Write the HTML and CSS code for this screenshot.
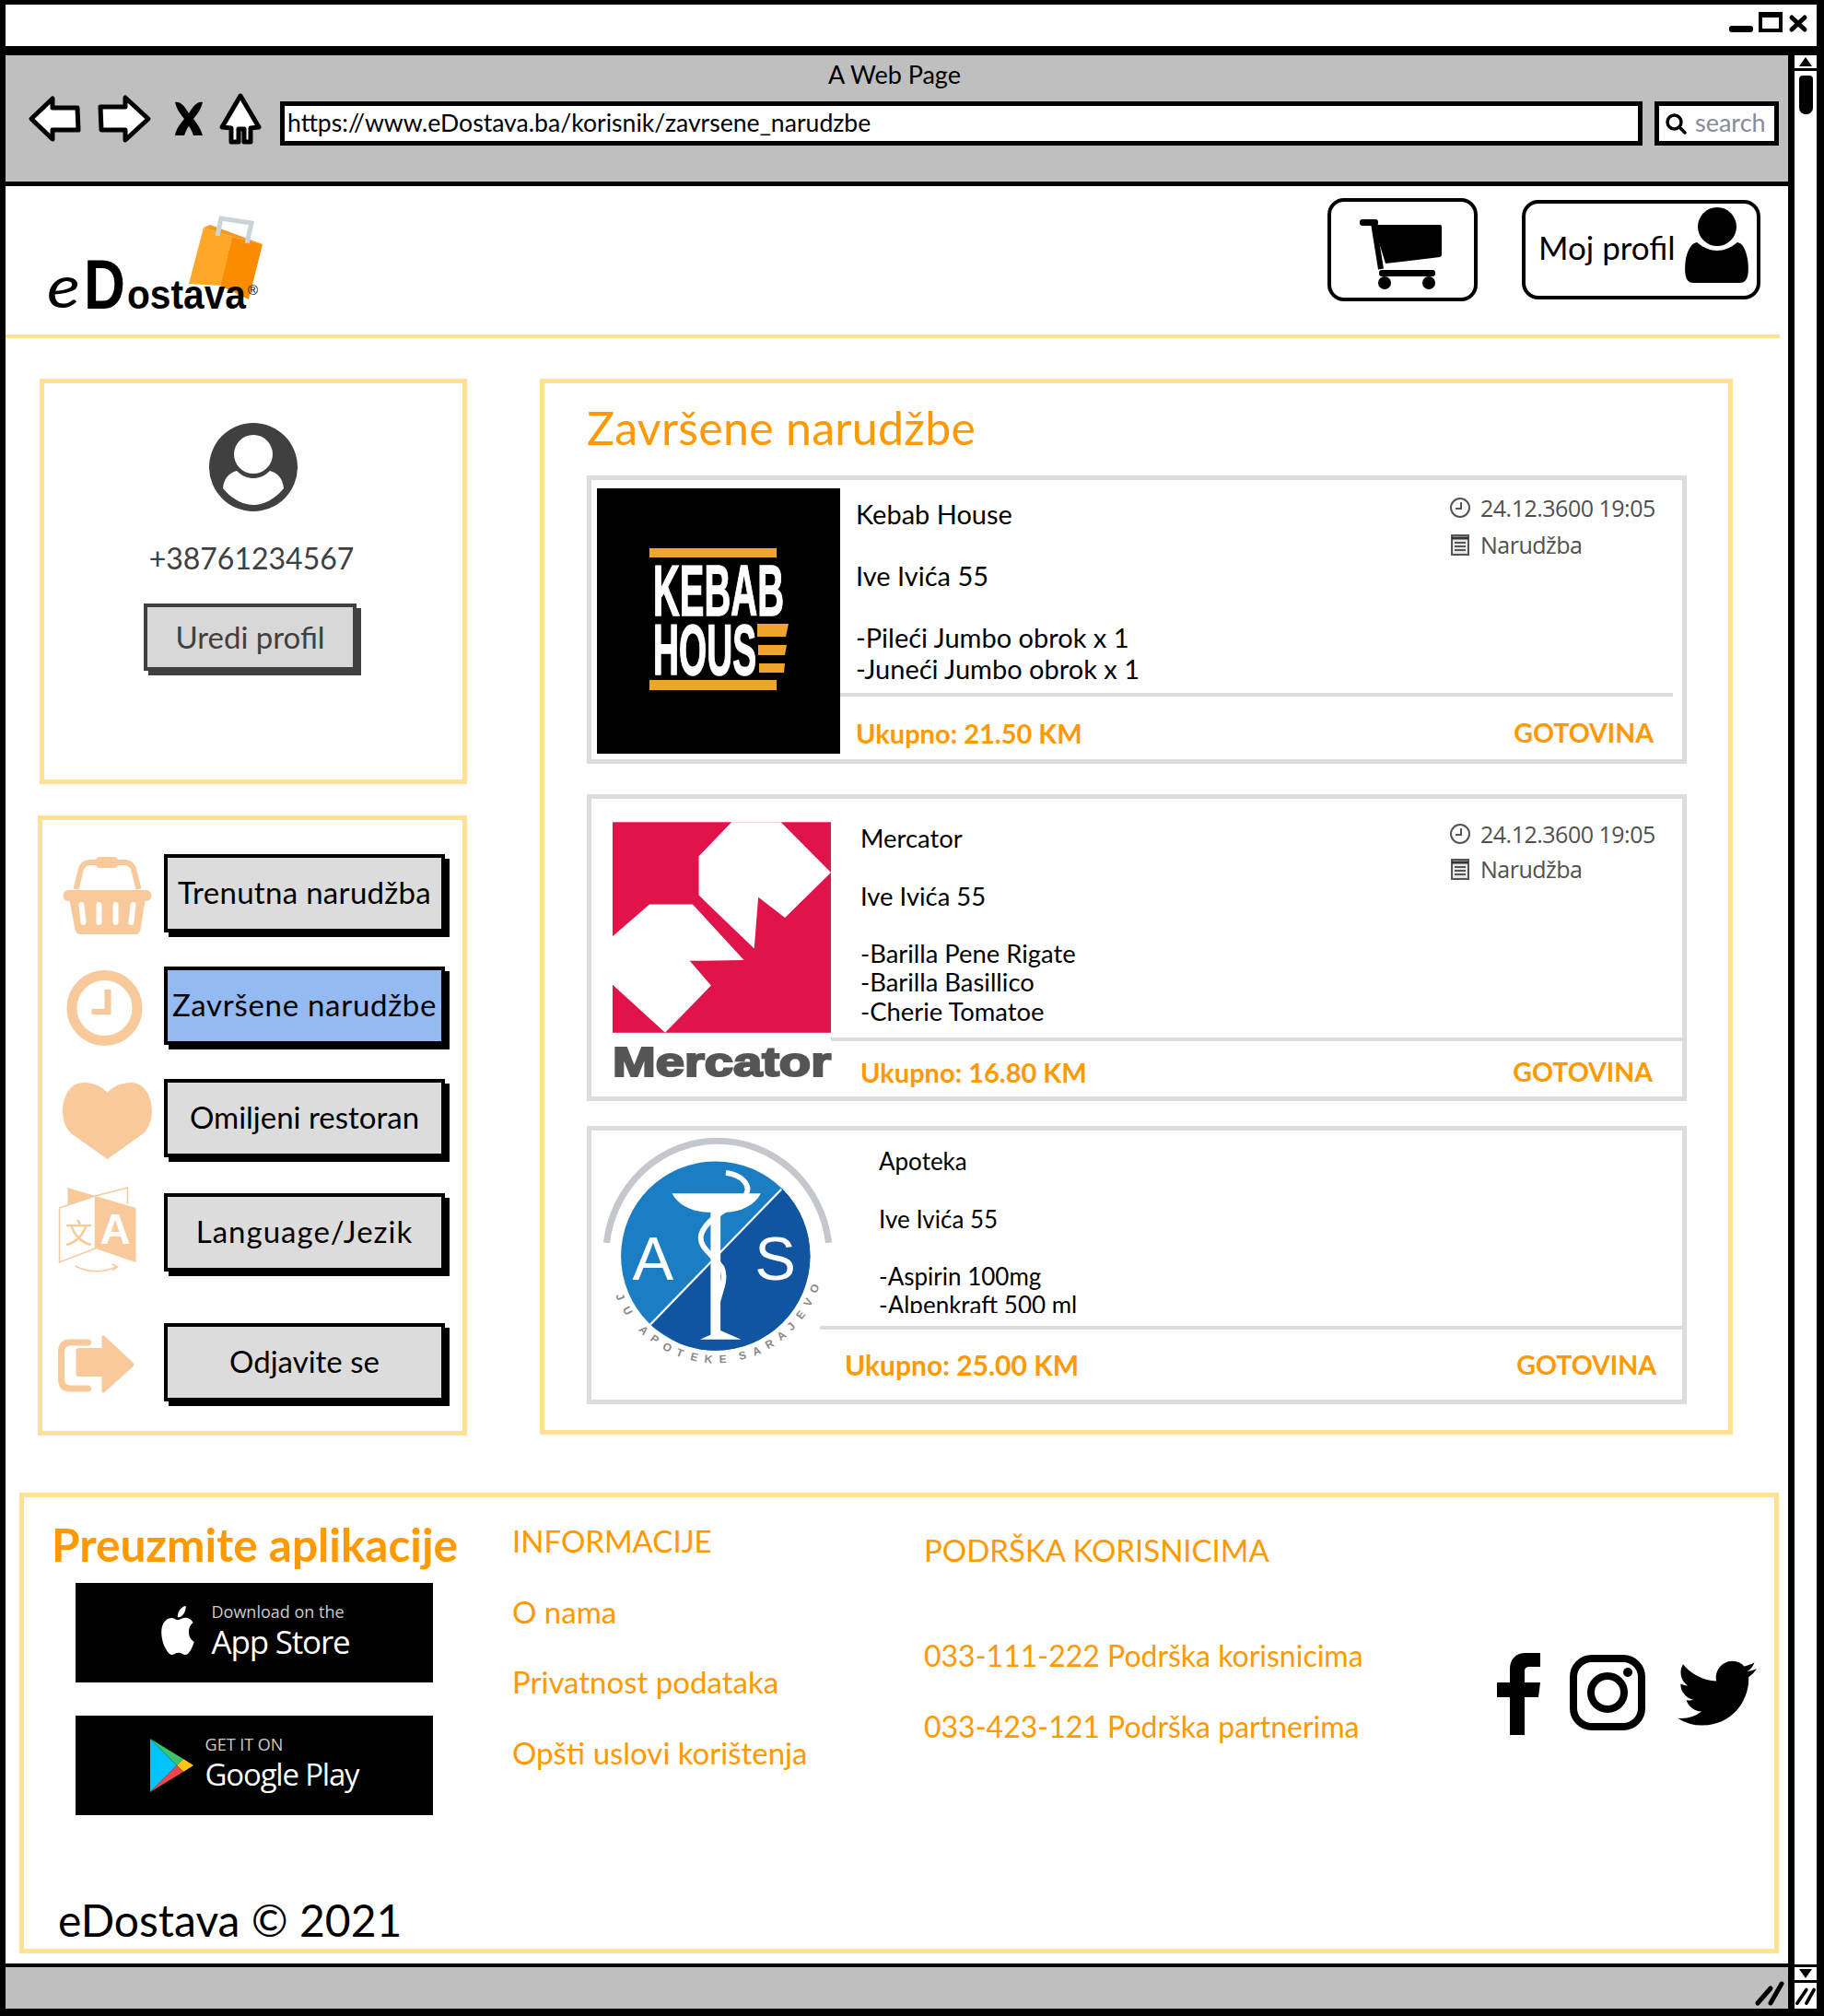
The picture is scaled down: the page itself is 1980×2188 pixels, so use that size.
FILE: index.html
```html
<!DOCTYPE html>
<html lang="bs">
<head>
    <meta charset="UTF-8">
    <meta name="viewport" content="width=device-width, initial-scale=1.0">
    <title>Završene narudžbe</title>
    <link rel="stylesheet" href="styles.css">
</head>
<body>
<div class="window">
    <div class="titlebar">
        <span class="win-min"></span>
        <span class="win-max"></span>
        <svg class="win-close" viewBox="0 0 20 17"><path d="M3 2l14 13M17 2L3 15" stroke="#000" stroke-width="5" stroke-linecap="round"/></svg>
    </div>

    <div class="frame">
        <div class="column">
            <div class="toolbar">
                <div class="toolbar-title">A Web Page</div>
                <div class="toolbar-row">
                    <svg class="tool tool-back" viewBox="0 0 56 50"><path d="M3 25L26 3v10h27l1 24H26v10z" fill="#fff" stroke="#000" stroke-width="5" stroke-linejoin="round"/></svg>
                    <svg class="tool tool-forward" viewBox="0 0 58 52"><path d="M55 26L30 3v10H3l1 25h26v11z" fill="#fff" stroke="#000" stroke-width="5" stroke-linejoin="round"/></svg>
                    <svg class="tool tool-stop" viewBox="0 0 32 38"><path d="M1 1c6-1 10 4 15 12 5-8 9-13 15-12-2 8-6 13-10 18 4 5 8 11 10 18H21c-2-5-3-8-5-10-2 2-3 5-5 10H1c1-7 6-13 10-18C7 14 3 9 1 1z"/></svg>
                    <svg class="tool tool-home" viewBox="0 0 46 56"><path d="M23 3l20 34-9 1v15H27V39h-6v14h-8V38l-10-1z" fill="#fff" stroke="#000" stroke-width="5" stroke-linejoin="round"/></svg>
                    <div class="url-box">https://www.eDostava.ba/korisnik/zavrsene_narudzbe</div>
                    <div class="search-box">
                        <svg class="search-icon" viewBox="0 0 24 24"><circle cx="10.5" cy="10.5" r="7.5" fill="none" stroke="#000" stroke-width="3.5"/><path d="M16 16l6 6" stroke="#000" stroke-width="3.5" stroke-linecap="round"/></svg>
                        <span>search</span>
                    </div>
                </div>
            </div>

            <div class="page">
                <div class="site-header">
                    <svg class="logo" viewBox="0 0 240 110">
                        <path d="M171 17l31 10-13 53-34-2z" fill="#ffa726"/>
                        <path d="M202 27l33 8-15 60-31-15z" fill="#fb8c00"/>
                        <path d="M171 17l7-3 57 21-33-8z" fill="#f59a1f"/>
                        <path d="M186 26l4-19 33 5-5 22" fill="none" stroke="#c9d3d9" stroke-width="5"/>
                        <text x="1" y="104" class="logo-e" textLength="36" lengthAdjust="spacingAndGlyphs">e</text>
                        <text x="41" y="105" class="logo-d" textLength="45" lengthAdjust="spacingAndGlyphs">D</text>
                        <text x="88" y="105" class="logo-rest" textLength="129" lengthAdjust="spacingAndGlyphs">ostava</text>
                        <text x="219" y="90" class="logo-reg">®</text>
                    </svg>
                    <div class="header-actions">
                        <div class="cart-button">
                            <svg class="cart-icon" viewBox="0 0 90 76">
                                <rect x="0" y="0" width="20" height="7" rx="3"/>
                                <path d="M15 6h72a2 2 0 0 1 2 2v30a3 3 0 0 1-2 3l-59 7z"/>
                                <path d="M15 4l8 50" stroke="#000" stroke-width="6" fill="none"/>
                                <rect x="21" y="55" width="61" height="7" rx="3"/>
                                <circle cx="27" cy="69" r="7"/>
                                <circle cx="75" cy="69" r="7"/>
                            </svg>
                        </div>
                        <div class="profile-button">
                            <span>Moj profil</span>
                            <svg class="profile-icon" viewBox="0 0 69 83">
                                <circle cx="35" cy="21" r="21"/>
                                <path d="M13 38c7 6 15 9 22 9s15-3 22-9c6 1 9 8 11 18 2 14 1 26-8 26H9C0 82-1 70 1 56c2-10 6-17 12-18z"/>
                            </svg>
                        </div>
                    </div>
                </div>
                <div class="header-rule"></div>

                <div class="content">
                    <div class="sidebar">
                        <div class="panel profile-panel">
                            <svg class="avatar" viewBox="0 0 96 96">
                                <circle cx="48" cy="48" r="48" fill="#404040"/>
                                <circle cx="48" cy="34" r="21" fill="#fff"/>
                                <path d="M15 71c1-11 7-17 15-19 6 6 12 8 18 8s12-2 18-8c8 2 14 8 15 19-9 11-21 18-33 18s-24-7-33-18z" fill="#fff"/>
                            </svg>
                            <div class="phone">+38761234567</div>
                            <div class="edit-button">Uredi profil</div>
                        </div>

                        <div class="panel menu-panel">
                            <div class="menu-row">
                                <svg class="menu-icon" viewBox="0 0 131 90">
                                    <path d="M36 38l5-20q2-9 11-9h36q9 0 11 9l5 20" fill="none" stroke="#f8c99b" stroke-width="6"/>
                                    <rect x="57" y="3" width="25" height="12" rx="5" fill="#f8c99b"/>
                                    <rect x="22" y="39" width="96" height="12" rx="6" fill="#f8c99b"/>
                                    <path d="M29 50h82l-5 32q-1 5-6 5H41q-5 0-6-5z" fill="#f8c99b"/>
                                    <g stroke="#fff" stroke-width="6" stroke-linecap="round">
                                        <path d="M42 55l2 19M61 55v19M79 55v19M98 55l-2 19"/>
                                    </g>
                                </svg>
                                <div class="menu-button menu-button-current">Trenutna narudžba</div>
                            </div>
                            <div class="menu-row">
                                <svg class="menu-icon" viewBox="0 0 131 90">
                                    <circle cx="67" cy="45" r="35.5" fill="none" stroke="#f8c99b" stroke-width="11"/>
                                    <path d="M67 25h7v27H53v-6h14z" fill="#f8c99b"/>
                                </svg>
                                <div class="menu-button menu-button-active">Završene narudžbe</div>
                            </div>
                            <div class="menu-row">
                                <svg class="menu-icon" viewBox="0 0 131 90">
                                    <path d="M70 87L32 60C14 46 20 4 44 4c12 0 21 5 26 11 5-6 14-11 26-11 24 0 30 42 12 56z" fill="#f8c99b"/>
                                </svg>
                                <div class="menu-button">Omiljeni restoran</div>
                            </div>
                            <div class="menu-row menu-row-lang">
                                <svg class="menu-icon" viewBox="0 0 131 90">
                                    <path d="M27-6l30 9-30 10z" fill="#f8c99b"/>
                                    <path d="M57 3l35-9v18" fill="none" stroke="#f8c99b" stroke-width="1.5"/>
                                    <path d="M18 16L57 3v57L18 75z" fill="#fff" stroke="#f8c99b" stroke-width="1.5"/>
                                    <path d="M57 3l44 13v59L57 60z" fill="#f8c99b"/>
                                    <text x="24" y="54" class="lang-cjk">文</text>
                                    <text x="62" y="55" class="lang-a">A</text>
                                    <path d="M35 79q22 11 45 1" fill="none" stroke="#f8c99b" stroke-width="1.5"/>
                                    <path d="M75 77l6 3-5 4" fill="none" stroke="#f8c99b" stroke-width="1.5"/>
                                </svg>
                                <div class="menu-button menu-button-lang">Language/Jezik</div>
                            </div>
                            <div class="menu-row menu-row-logout">
                                <svg class="menu-icon" viewBox="0 0 131 90">
                                    <path d="M49 21H30q-10 0-10 10v30q0 10 10 10h19" fill="none" stroke="#f8c99b" stroke-width="7" stroke-linecap="round"/>
                                    <path d="M39 27h25V15q0-3 3-1l31 29q2 2 0 4L67 75q-3 2-3-1V58H39q-3 0-3-3V30q0-3 3-3z" fill="#f8c99b"/>
                                </svg>
                                <div class="menu-button">Odjavite se</div>
                            </div>
                        </div>
                    </div>

                    <div class="panel orders-panel">
                        <h2 class="orders-title">Završene narudžbe</h2>

                        <div class="order order-kebab">
                            <svg class="order-logo" viewBox="0 0 264 288">
                                <rect width="264" height="288"/>
                                <rect x="57" y="65" width="138" height="10" fill="#efa52b"/>
                                <text x="61" y="138" class="kebab-text" textLength="142" lengthAdjust="spacingAndGlyphs">KEBAB</text>
                                <text x="61" y="202" class="kebab-text" textLength="112" lengthAdjust="spacingAndGlyphs">HOUS</text>
                                <path d="M174 147h34l-3 14h-31zM175 170h31l-2 11h-29zM176 190h28l-1 10h-27z" fill="#efa52b"/>
                                <rect x="57" y="208" width="138" height="11" fill="#efa52b"/>
                            </svg>
                            <div class="order-body">
                                <div class="order-top">
                                    <div class="order-details">
                                        <p>Kebab House</p>
                                        <p>Ive Ivića 55</p>
                                        <p class="order-items">-Pileći Jumbo obrok x 1<br>-Juneći Jumbo obrok x 1</p>
                                    </div>
                                    <div class="order-meta">
                                        <div class="meta-line">
                                            <svg class="meta-icon" viewBox="0 0 24 24"><circle cx="12" cy="12" r="10" fill="none" stroke="#555" stroke-width="2"/><path d="M13 6v7H7" fill="none" stroke="#555" stroke-width="2"/></svg>
                                            <span>24.12.3600 19:05</span>
                                        </div>
                                        <div class="meta-line">
                                            <svg class="meta-icon" viewBox="0 0 24 24"><rect x="3" y="2" width="18" height="21" fill="#e8e4ea" stroke="#555" stroke-width="2"/><path d="M3 5h18" stroke="#333" stroke-width="3"/><path d="M6 10h12M6 14h12M6 18h12" stroke="#555" stroke-width="2"/></svg>
                                            <span>Narudžba</span>
                                        </div>
                                    </div>
                                </div>
                                <div class="order-foot">
                                    <span class="order-total">Ukupno: 21.50 KM</span>
                                    <span class="order-pay">GOTOVINA</span>
                                </div>
                            </div>
                        </div>

                        <div class="order order-mercator">
                            <svg class="order-logo" viewBox="100 72 532 625">
                                <rect x="100" y="72" width="532" height="513" fill="#e0134b"/>
                                <path d="M390 72l-80 83v95l135 130 10-125 65 50 112-110L510 72z" fill="#fff"/>
                                <path d="M100 350l90-78h105l125 136-132 2 52 60-112 115-128-117z" fill="#fff"/>
                                <text x="100" y="690" class="mercator-text" textLength="532" lengthAdjust="spacingAndGlyphs">Mercator</text>
                            </svg>
                            <div class="order-body">
                                <div class="order-top">
                                    <div class="order-details">
                                        <p>Mercator</p>
                                        <p>Ive Ivića 55</p>
                                        <p class="order-items">-Barilla Pene Rigate<br>-Barilla Basillico<br>-Cherie Tomatoe</p>
                                    </div>
                                    <div class="order-meta">
                                        <div class="meta-line">
                                            <svg class="meta-icon" viewBox="0 0 24 24"><circle cx="12" cy="12" r="10" fill="none" stroke="#555" stroke-width="2"/><path d="M13 6v7H7" fill="none" stroke="#555" stroke-width="2"/></svg>
                                            <span>24.12.3600 19:05</span>
                                        </div>
                                        <div class="meta-line">
                                            <svg class="meta-icon" viewBox="0 0 24 24"><rect x="3" y="2" width="18" height="21" fill="#e8e4ea" stroke="#555" stroke-width="2"/><path d="M3 5h18" stroke="#333" stroke-width="3"/><path d="M6 10h12M6 14h12M6 18h12" stroke="#555" stroke-width="2"/></svg>
                                            <span>Narudžba</span>
                                        </div>
                                    </div>
                                </div>
                                <div class="order-foot">
                                    <span class="order-total">Ukupno: 16.80 KM</span>
                                    <span class="order-pay">GOTOVINA</span>
                                </div>
                            </div>
                        </div>

                        <div class="order order-apoteka">
                            <svg class="order-logo" viewBox="75 845 560 580">
                                <defs>
                                    <clipPath id="disc"><circle cx="350" cy="1132" r="230"/></clipPath>
                                </defs>
                                <path d="M85 1100A272 282 0 0 1 625 1100" fill="none" stroke="#c4c7cb" stroke-width="16"/>
                                <circle cx="350" cy="1132" r="230" fill="#1b7ec4"/>
                                <path d="M520 960L190 1300 350 1400 600 1250 600 1000z" fill="#11549f" clip-path="url(#disc)"/>
                                <path d="M510 970L190 1300" stroke="#fff" stroke-width="5" clip-path="url(#disc)"/>
                                <text x="148" y="1190" class="as-text">A</text>
                                <text x="445" y="1190" class="as-text">S</text>
                                <path d="M244 980h216c-14 28-46 44-85 46h-44c-40-2-72-18-87-46z" fill="#fff"/>
                                <rect x="338" y="1000" width="24" height="325" fill="#fff"/>
                                <path d="M312 1335h100l-50-22z" fill="#fff"/>
                                <path d="M375 930c40 5 60 30 50 50-10 25-95 50-110 100-8 30 30 50 50 80 15 30-10 70-20 120" fill="none" stroke="#fff" stroke-width="13"/>
                                <text class="ring-label" x="107 123 142 162 189 219 252 287 322 359 384 409 444 477 508 535 559 579 595" y="1228 1261 1290 1312 1336 1357 1373 1384 1391 1392 1390 1385 1375 1359 1339 1315 1288 1257 1224" rotate="68 60 53 46 38 30 22 14 6 -2 -8 -13 -21 -29 -37 -45 -53 -61 -69">JU APOTEKE SARAJEVO</text>
                            </svg>
                            <div class="order-body">
                                <div class="order-top">
                                    <div class="order-details">
                                        <p>Apoteka</p>
                                        <p>Ive Ivića 55</p>
                                        <p class="order-items">-Aspirin 100mg<br>-Alpenkraft 500 ml</p>
                                    </div>
                                </div>
                                <div class="order-foot">
                                    <span class="order-total">Ukupno: 25.00 KM</span>
                                    <span class="order-pay">GOTOVINA</span>
                                </div>
                            </div>
                        </div>
                    </div>
                </div>

                <div class="panel site-footer">
                    <div class="footer-row">
                        <div class="footer-apps">
                            <h3 class="apps-title">Preuzmite aplikacije</h3>
                            <div class="store-badge">
                                <svg class="apple-icon" viewBox="1 0 22 24" preserveAspectRatio="none"><path fill="#fff" d="M12.152 6.896c-.948 0-2.415-1.078-3.96-1.04-2.04.027-3.91 1.183-4.961 3.014-2.117 3.675-.546 9.103 1.519 12.09 1.013 1.454 2.208 3.09 3.792 3.039 1.52-.065 2.09-.987 3.935-.987 1.831 0 2.35.987 3.96.948 1.637-.026 2.676-1.48 3.676-2.948 1.156-1.688 1.636-3.325 1.662-3.415-.039-.013-3.182-1.221-3.22-4.857-.026-3.04 2.48-4.494 2.597-4.559-1.429-2.09-3.623-2.324-4.39-2.376-2-.156-3.675 1.09-4.61 1.09zM15.53 3.83c.843-1.012 1.4-2.427 1.245-3.83-1.207.052-2.662.805-3.532 1.818-.78.896-1.454 2.338-1.273 3.714 1.338.104 2.715-.688 3.559-1.701"/></svg>
                                <div class="badge-text">
                                    <span class="badge-small">Download on the</span>
                                    <span class="badge-big">App Store</span>
                                </div>
                            </div>
                            <div class="store-badge store-badge-play">
                                <svg class="play-icon" viewBox="0 0 47 58">
                                    <path d="M0 0v58l29-29z" fill="#00c3ff"/>
                                    <path d="M0 0l29 29 7-7z" fill="#3bc46c"/>
                                    <path d="M36 22l11 7-11 7-7-7z" fill="#ffc712"/>
                                    <path d="M0 58l36-22-7-7z" fill="#ef4550"/>
                                </svg>
                                <div class="badge-text">
                                    <span class="badge-small">GET IT ON</span>
                                    <span class="badge-big">Google Play</span>
                                </div>
                            </div>
                        </div>
                        <div class="footer-links">
                            <div class="footer-heading">INFORMACIJE</div>
                            <a href="#">O nama</a>
                            <a href="#">Privatnost podataka</a>
                            <a href="#">Opšti uslovi korištenja</a>
                        </div>
                        <div class="footer-support">
                            <div class="footer-heading">PODRŠKA KORISNICIMA</div>
                            <a href="#">033-111-222 Podrška korisnicima</a>
                            <a href="#">033-423-121 Podrška partnerima</a>
                        </div>
                        <div class="footer-social">
                            <svg class="social-fb" viewBox="0 0 47 89"><path d="M14 32H0v16h14v41h16V48h15l2-16H30V20c0-4 2-5 6-5h11V0H31C20 0 14 7 14 18z"/></svg>
                            <svg class="social-ig" viewBox="0 0 82 82"><rect x="4" y="4" width="74" height="74" rx="20" fill="none" stroke="#000" stroke-width="8"/><circle cx="41" cy="41" r="18" fill="none" stroke="#000" stroke-width="8"/><circle cx="63" cy="19" r="5"/></svg>
                            <svg class="social-tw" viewBox="0 2 24 19.6" preserveAspectRatio="none"><path d="M23.953 4.57a10 10 0 01-2.825.775 4.958 4.958 0 002.163-2.723c-.951.555-2.005.959-3.127 1.184a4.92 4.92 0 00-8.384 4.482C7.69 8.095 4.067 6.13 1.64 3.162a4.822 4.822 0 00-.666 2.475c0 1.71.87 3.213 2.188 4.096a4.904 4.904 0 01-2.228-.616v.06a4.923 4.923 0 003.946 4.827 4.996 4.996 0 01-2.212.085 4.936 4.936 0 004.604 3.417 9.867 9.867 0 01-6.102 2.105c-.39 0-.779-.023-1.17-.067a13.995 13.995 0 007.557 2.209c9.053 0 13.998-7.496 13.998-13.985 0-.21 0-.42-.015-.63A9.935 9.935 0 0024 4.59z"/></svg>
                        </div>
                    </div>
                    <div class="copyright">eDostava © 2021</div>
                </div>
            </div>

            <div class="statusbar">
                <svg class="grip" viewBox="0 0 30 26"><path d="M3 24L17 8M17 24L29 3" stroke="#000" stroke-width="5" stroke-linecap="round"/></svg>
            </div>
        </div>

        <div class="scrollbar">
            <div class="scroll-btn"><span class="arrow-up"></span></div>
            <div class="scroll-thumb"></div>
            <div class="scroll-btn scroll-btn-down"><span class="arrow-down"></span></div>
            <div class="scroll-grip">
                <svg viewBox="0 0 24 24"><path d="M2 22L13 6M13 22L22 6" stroke="#000" stroke-width="4" stroke-linecap="round"/></svg>
            </div>
        </div>
    </div>
</div>
</body>
</html>
```

FILE: styles.css
```css
* {
    box-sizing: border-box;
}

body {
    margin: 0;
    font-family: "Lato", "Noto Sans", sans-serif;
    background: #fff;
    color: #000;
}

svg {
    display: block;
    flex-shrink: 0;
    overflow: visible;
}

/* browser window */
.window {
    width: 1980px;
    height: 2188px;
    display: flex;
    flex-direction: column;
    border-style: solid;
    border-color: #000;
    border-width: 5px 8px 8px 6px;
    overflow: hidden;
}

.titlebar {
    height: 55px;
    flex-shrink: 0;
    border-bottom: 10px solid #000;
    display: flex;
    align-items: flex-start;
    justify-content: flex-end;
    padding-right: 10px;
}

.win-min {
    width: 26px;
    height: 7px;
    margin-top: 23px;
    background: #000;
    border-radius: 3px;
}

.win-max {
    width: 26px;
    height: 22px;
    margin: 8px 0 0 6px;
    border: 4px solid #000;
    border-top-width: 6px;
}

.win-close {
    width: 20px;
    height: 17px;
    margin: 12px 0 0 7px;
}

.frame {
    flex: 1;
    display: flex;
    min-height: 0;
}

.column {
    width: 1935px;
    display: flex;
    flex-direction: column;
}

/* toolbar */
.toolbar {
    height: 142px;
    flex-shrink: 0;
    background: #bfbfbf;
    border-bottom: 5px solid #000;
    padding: 6px 10px 0 25px;
}

.toolbar-title {
    font-size: 27px;
    line-height: 30px;
    text-align: center;
    padding-right: 20px;
}

.toolbar-row {
    display: flex;
    align-items: center;
    margin-top: 4px;
    height: 58px;
}

.tool-back {
    width: 56px;
    height: 50px;
}

.tool-forward {
    width: 58px;
    height: 52px;
    margin-left: 19px;
}

.tool-stop {
    width: 32px;
    height: 38px;
    margin-left: 25px;
}

.tool-home {
    width: 46px;
    height: 56px;
    margin-left: 17px;
}

.url-box {
    flex: 1;
    height: 48px;
    margin-left: 20px;
    padding-left: 3px;
    align-self: flex-end;
    background: #fff;
    border: 5px solid #000;
    font-size: 26.6px;
    line-height: 36px;
}

.search-box {
    width: 135px;
    height: 48px;
    margin-left: 13px;
    align-self: flex-end;
    background: #fff;
    border: 5px solid #000;
    display: flex;
    align-items: center;
    gap: 9px;
    padding: 0 0 4px 6px;
    font-size: 27px;
    color: #8a8a98;
}

.search-icon {
    width: 24px;
    height: 24px;
    margin-top: 4px;
}

.scrollbar {
    flex: 1;
    border-left: 7px solid #000;
    display: flex;
    flex-direction: column;
    align-items: center;
}

.scroll-btn {
    width: 100%;
    height: 17px;
    display: flex;
    align-items: center;
    justify-content: center;
    border-bottom: 3px solid #000;
}

.arrow-up {
    border: 7px solid transparent;
    border-top: 0;
    border-bottom: 10px solid #000;
}

.arrow-down {
    border: 7px solid transparent;
    border-bottom: 0;
    border-top: 10px solid #000;
}

.scroll-thumb {
    width: 15px;
    height: 42px;
    margin-top: 5px;
    background: #000;
    border-radius: 4px 4px 7px 7px;
}

.scroll-btn-down {
    margin-top: auto;
    height: 20px;
    border-top: 3px solid #000;
}

.scroll-grip {
    width: 100%;
    height: 28px;
    padding: 2px 1px;
}

.page {
    flex: 1;
    min-height: 0;
    display: flex;
    flex-direction: column;
}

/* site header */
.site-header {
    height: 161px;
    flex-shrink: 0;
    display: flex;
    justify-content: space-between;
    align-items: flex-start;
    padding: 13px 30px 0 44px;
}

.logo {
    width: 240px;
    height: 110px;
    margin-top: 15px;
}

.logo-e {
    font-family: "Lato", sans-serif;
    font-style: italic;
    font-size: 64px;
}

.logo-d {
    font-family: "Liberation Sans", sans-serif;
    font-weight: 700;
    font-size: 76px;
}

.logo-rest {
    font-family: "Liberation Sans", sans-serif;
    font-weight: 700;
    font-size: 44px;
}

.logo-reg {
    font-family: "Liberation Sans", sans-serif;
    font-size: 15px;
}

.header-actions {
    display: flex;
    align-items: center;
    gap: 48px;
}

.cart-button {
    width: 163px;
    height: 112px;
    border: 4px solid #000;
    border-radius: 18px;
    padding: 19px 0 0 31px;
}

.cart-icon {
    width: 90px;
    height: 76px;
}

.profile-button {
    width: 259px;
    height: 108px;
    border: 4px solid #000;
    border-radius: 18px;
    display: flex;
    align-items: flex-start;
    justify-content: space-between;
    padding: 4px 9px 0 14px;
    font-size: 35px;
}

.profile-button span {
    line-height: 44px;
    margin-top: 21px;
}

.profile-icon {
    width: 69px;
    height: 83px;
}

.header-rule {
    height: 4px;
    margin-right: 9px;
    flex-shrink: 0;
    background: #ffe296;
}

/* main area */
.content {
    display: flex;
    padding: 44px 0 0 37px;
    gap: 79px;
    flex-shrink: 0;
}

.sidebar {
    width: 464px;
    flex-shrink: 0;
}

.panel {
    border: 5px solid #ffe296;
    background: #fff;
}

.profile-panel {
    height: 440px;
    display: flex;
    flex-direction: column;
    align-items: center;
    padding-top: 43px;
}

.avatar {
    width: 96px;
    height: 96px;
}

.phone {
    margin-top: 31px;
    font-size: 32px;
    line-height: 40px;
    color: #404040;
    padding-right: 4px;
}

.edit-button {
    width: 231px;
    height: 73px;
    margin-top: 29px;
    margin-right: 7px;
    background: #d8d8d8;
    border: 4px solid #404040;
    box-shadow: 5px 5px 0 #404040;
    font-size: 33px;
    line-height: 65px;
    text-align: center;
    color: #404040;
}

.menu-panel {
    height: 673px;
    margin: 34px 0 0 -2px;
    padding-top: 37px;
    display: flex;
    flex-direction: column;
    gap: 32px;
}

.menu-row {
    display: flex;
    height: 90px;
}

.menu-row-lang {
    margin-top: 2px;
}

.menu-row-logout {
    margin-top: 19px;
}

.menu-icon {
    width: 132px;
    height: 90px;
}

.menu-button {
    width: 305px;
    height: 85px;
    background: #dcdcdc;
    border: 4px solid #000;
    box-shadow: 5px 5px 0 #000;
    font-size: 33px;
    line-height: 75px;
    text-align: center;
    white-space: nowrap;
}

.menu-button-current {
    letter-spacing: 0.3px;
}

.menu-button-active {
    background: #93baf2;
    letter-spacing: 0.7px;
}

.menu-button-lang {
    letter-spacing: 1px;
}

.lang-cjk {
    font-family: "Noto Sans CJK SC", sans-serif;
    font-size: 30px;
    fill: #f8c99b;
}

.lang-a {
    font-family: "Liberation Sans", sans-serif;
    font-weight: 700;
    font-size: 46px;
    fill: #fff;
}

/* orders */
.orders-panel {
    width: 1295px;
    height: 1146px;
    padding: 0 0 0 46px;
    flex-shrink: 0;
}

.orders-title {
    margin: 0;
    padding-top: 19px;
    height: 100px;
    font-size: 50px;
    line-height: 58px;
    letter-spacing: 0.3px;
    font-weight: 400;
    color: #ff9900;
}

.order {
    width: 1194px;
    border: 5px solid #dcdcdc;
    background: #fff;
    display: flex;
}

.order-kebab {
    height: 313px;
}

.order-mercator {
    height: 333px;
    margin-top: 33px;
}

.order-apoteka {
    height: 302px;
    margin-top: 27px;
}

.order-kebab .order-logo {
    width: 264px;
    height: 288px;
    margin: 9px 0 0 6px;
}

.order-mercator .order-logo {
    width: 237px;
    height: 279px;
    margin: 25px 0 0 23px;
}

.order-apoteka .order-logo {
    width: 250px;
    height: 259px;
    margin: 8px 0 0 12px;
}

.order-body {
    flex: 1;
    min-width: 0;
    display: flex;
    flex-direction: column;
}

.order-apoteka .order-body {
    margin-left: -14px;
}

.order-top {
    display: flex;
    border-bottom: 4px solid #dcdcdc;
}

.order-kebab .order-top {
    height: 235px;
    padding: 20px 0 0 17px;
    margin-right: 10px;
    font-size: 29px;
    line-height: 33.5px;
}

.order-mercator .order-top {
    height: 263px;
    padding: 27px 0 0 32px;
    font-size: 27.4px;
    line-height: 31.3px;
}

.order-apoteka .order-top {
    height: 216px;
    padding: 18px 0 0 64px;
    font-size: 26px;
    line-height: 31.3px;
}

.order-details {
    flex: 1;
    min-width: 0;
}

.order-apoteka .order-details {
    height: 180px;
    overflow: hidden;
}

.order-details p {
    margin: 0 0 1lh;
}

.order-details .order-items {
    margin: 0;
}

.order-meta {
    width: 253px;
    font-family: "Open Sans", sans-serif;
    font-size: 25px;
    color: #505050;
    line-height: 34px;
    flex-shrink: 0;
}

.order-kebab .order-meta {
    width: 243px;
    margin-top: -7px;
}

.order-mercator .order-meta {
    margin-top: -6px;
}

.meta-line {
    display: flex;
    align-items: center;
    gap: 10px;
    letter-spacing: -0.5px;
    white-space: nowrap;
}

.meta-line + .meta-line {
    margin-top: 6px;
}

.order-mercator .meta-line + .meta-line {
    margin-top: 4px;
}

.meta-icon {
    width: 24px;
    height: 24px;
}

.order-foot {
    flex: 1;
    display: flex;
    justify-content: space-between;
    align-items: center;
    font-size: 29px;
    font-weight: 700;
    color: #ff9900;
    padding: 10px 31px 0 17px;
}

.order-mercator .order-foot {
    padding: 6px 32px 0 32px;
}

.order-apoteka .order-foot {
    padding: 0 28px 0 27px;
}

.order-apoteka .order-total {
    font-size: 30px;
}

.order-pay {
    font-size: 28.5px;
}

/* footer */
.site-footer {
    height: 500px;
    margin: 62px 10px 0 15px;
    flex-shrink: 0;
    display: flex;
    flex-direction: column;
    padding: 0 0 2px 30px;
}

.footer-row {
    flex: 1;
    display: flex;
    align-items: flex-start;
}

.footer-apps {
    width: 500px;
    flex-shrink: 0;
    padding-top: 26px;
}

.apps-title {
    margin: 0 0 17px;
    font-size: 49.5px;
    line-height: 50px;
    font-weight: 700;
    color: #ff9900;
    white-space: nowrap;
}

.store-badge {
    width: 388px;
    height: 108px;
    margin-left: 26px;
    background: #000;
    color: #fff;
    display: flex;
    align-items: center;
    justify-content: center;
    gap: 17px;
    padding-bottom: 5px;
}

.store-badge-play {
    margin-top: 36px;
    gap: 13px;
}

.apple-icon {
    width: 40px;
    height: 53px;
}

.play-icon {
    width: 47px;
    height: 58px;
    margin-top: 5px;
}

.badge-text {
    display: flex;
    flex-direction: column;
    font-family: "Open Sans", sans-serif;
}

.badge-small {
    font-size: 18px;
    line-height: 24px;
    color: #ccc;
}

.badge-big {
    font-size: 35px;
    line-height: 42px;
    letter-spacing: -1.2px;
}

.store-badge-play .badge-big {
    font-size: 33px;
}

.footer-links,
.footer-support {
    flex-shrink: 0;
    display: flex;
    flex-direction: column;
    font-size: 33px;
    line-height: 40px;
    color: #ff9900;
}

.footer-links a,
.footer-support a {
    color: inherit;
    text-decoration: none;
}

.footer-links {
    width: 447px;
    padding-top: 27px;
    gap: 36.5px;
}

.footer-support {
    width: 622px;
    padding-top: 37px;
    gap: 37px;
}

.footer-support a {
    font-size: 32px;
}

.footer-support a:first-of-type {
    margin-top: 38px;
}

.footer-social {
    display: flex;
    align-items: flex-start;
    margin-top: 169px;
    gap: 32px;
}

.social-fb {
    width: 47px;
    height: 89px;
}

.social-ig {
    width: 82px;
    height: 82px;
    margin-top: 2px;
}

.social-tw {
    width: 86px;
    height: 70px;
    margin: 8px 0 0 3px;
}

.copyright {
    font-size: 48px;
    line-height: 58px;
    margin-left: 7px;
}

.statusbar {
    margin-top: auto;
    height: 49px;
    flex-shrink: 0;
    background: #bfbfbf;
    border-top: 4px solid #000;
    display: flex;
    justify-content: flex-end;
    padding: 15px 6px 0 0;
}

.grip {
    width: 30px;
    height: 26px;
}

/* logos */
.kebab-text {
    font-family: "Liberation Sans", sans-serif;
    font-weight: 700;
    font-size: 78px;
    fill: #fff;
    stroke: #fff;
    stroke-width: 1.5px;
}

.mercator-text {
    font-family: "Liberation Sans", sans-serif;
    font-weight: 700;
    font-size: 100px;
    fill: #555;
    stroke: #555;
    stroke-width: 5px;
}

.as-text {
    font-family: "Liberation Sans", sans-serif;
    font-size: 150px;
    fill: #fff;
}

.ring-label {
    font-family: "Liberation Sans", sans-serif;
    font-weight: 700;
    font-size: 27px;
    fill: #888;
}
```
